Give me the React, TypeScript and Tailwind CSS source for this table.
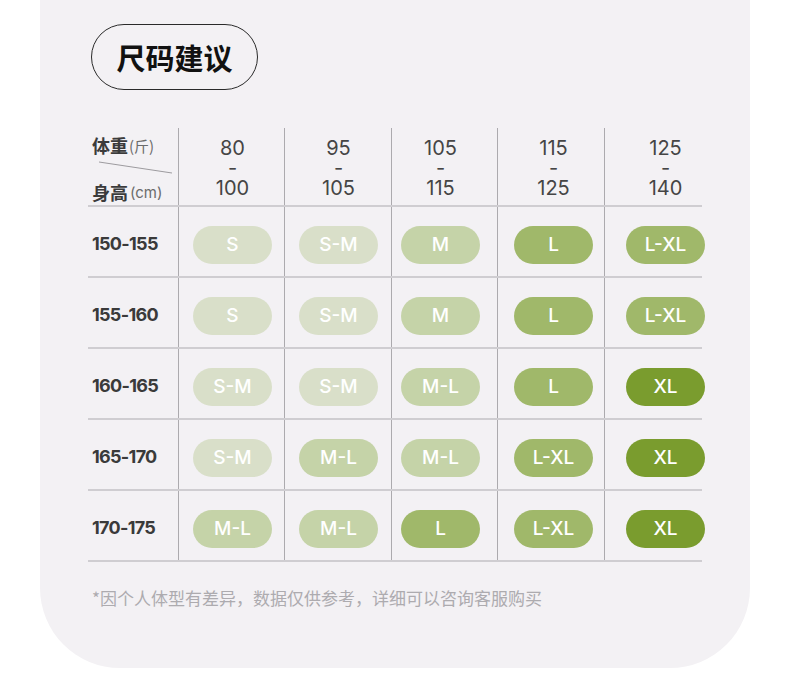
import React from 'react';

const cjk = '"Noto Sans CJK SC", "Noto Sans", sans-serif';
const num = 'Inter, "Noto Sans CJK SC", sans-serif';

// column boxes: width + left offset of the 79px content box
const cols = [
  { w: 'w-[106px]', pl: 'pl-[14px]' },
  { w: 'w-[107px]', pl: 'pl-[14px]' },
  { w: 'w-[106px]', pl: 'pl-[9px]' },
  { w: 'w-[107px]', pl: 'pl-[16px]' },
  { w: 'w-[120px]', pl: 'pl-[21px]' },
];

const ranges = [
  ['80', '100'],
  ['95', '105'],
  ['105', '115'],
  ['115', '125'],
  ['125', '140'],
];

const rows = [
  { h: '150-155', s: ['S', 'S-M', 'M', 'L', 'L-XL'] },
  { h: '155-160', s: ['S', 'S-M', 'M', 'L', 'L-XL'] },
  { h: '160-165', s: ['S-M', 'S-M', 'M-L', 'L', 'XL'] },
  { h: '165-170', s: ['S-M', 'M-L', 'M-L', 'L-XL', 'XL'] },
  { h: '170-175', s: ['M-L', 'M-L', 'L', 'L-XL', 'XL'] },
];

const pillColor: Record<string, string> = {
  S: 'bg-[#d9dfc9]',
  'S-M': 'bg-[#d9dfc9]',
  M: 'bg-[#c5d3a8]',
  'M-L': 'bg-[#c5d3a8]',
  L: 'bg-[#a0b86a]',
  'L-XL': 'bg-[#a0b86a]',
  XL: 'bg-[#7a9c2e]',
};

function Line() {
  return <div className="h-[2px] w-[614px] bg-[#cfcdd1]" />;
}

export default function App() {
  return (
    <div className="w-[790px] h-[678px] bg-white overflow-hidden">
      <div className="ml-[40px] w-[710px] h-[668px] bg-[#f3f1f4] rounded-b-[80px] pt-[24px]">
        {/* title */}
        <div className="ml-[51px] w-[167px] h-[66px] rounded-full border-[1.5px] border-[#2a2a2a] flex items-center justify-center">
          <span className="text-[29px] font-semibold text-[#111] leading-none" style={{ fontFamily: cjk }}>
            尺码建议
          </span>
        </div>

        {/* table */}
        <div className="ml-[48px] mt-[38px] w-[636px]">
          {/* header */}
          <div className="flex h-[77px]">
            <div className="relative w-[90px] pl-[4px]" style={{ fontFamily: cjk }}>
              <div className="mt-[4px] h-[22px] flex items-end leading-none">
                <span className="text-[18px] font-bold text-[#3b3b3b]">体重</span>
                <span className="text-[15px] text-[#6b6b6b] ml-[1px] mb-[1px]">(斤)</span>
              </div>
              <div className="mt-[25px] h-[22px] flex items-end leading-none">
                <span className="text-[18px] font-bold text-[#3b3b3b]">身高</span>
                <span className="text-[15px] text-[#6b6b6b] ml-[2px] mb-[1px]" style={{ fontFamily: num }}>(cm)</span>
              </div>
              <svg className="absolute left-0 top-0" width="90" height="77">
                <line x1="11" y1="34" x2="84" y2="45" stroke="#9d9b9f" strokeWidth="1" />
              </svg>
            </div>
            {cols.map((c, i) => (
              <div key={i} className={`${c.w} ${c.pl} border-l border-[#acaaae]`}>
                <div
                  className="w-[79px] pt-[10px] text-center whitespace-pre-line text-[20px] leading-[20px] text-[#454545]"
                  style={{ fontFamily: num }}
                >
                  {`${ranges[i][0]}\n-\n${ranges[i][1]}`}
                </div>
              </div>
            ))}
          </div>
          <Line />

          {rows.map((r) => (
            <div key={r.h}>
              <div className="flex h-[69px]">
                <div className="w-[90px] pl-[4px] pt-[4px] flex items-center text-[18px] font-bold tracking-[-0.7px] text-[#3a3a3a]" style={{ fontFamily: num }}>
                  {r.h}
                </div>
                {cols.map((c, i) => (
                  <div key={i} className={`${c.w} ${c.pl} pt-[7px] flex items-center border-l border-[#acaaae]`}>
                    <div
                      className={`w-[79px] h-[38px] rounded-full flex items-center justify-center text-white text-[19px] font-medium ${pillColor[r.s[i]]}`}
                      style={{ fontFamily: num }}
                    >
                      {r.s[i]}
                    </div>
                  </div>
                ))}
              </div>
              <Line />
            </div>
          ))}
        </div>

        {/* note */}
        <div className="ml-[52px] mt-[27px] text-[17px] text-[#adabaf] leading-none" style={{ fontFamily: cjk }}>
          *因个人体型有差异，数据仅供参考，详细可以咨询客服购买
        </div>
      </div>
    </div>
  );
}
